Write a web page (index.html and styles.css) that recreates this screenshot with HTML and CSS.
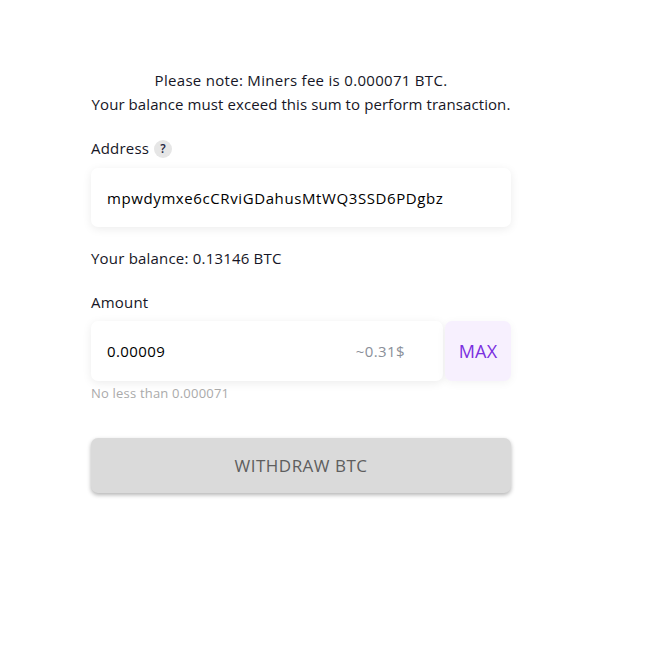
FILE: index.html
```html
<!DOCTYPE html>
<html>
<head>
<meta charset="utf-8">
<link rel="stylesheet" href="styles.css">
</head>
<body>
<div class="form">
  <div class="note">
    <div class="note-line first">Please note: Miners fee is 0.000071 BTC.</div>
    <div class="note-line">Your balance must exceed this sum to perform transaction.</div>
  </div>
  <div class="label address-label">Address <span class="help">?</span></div>
  <div class="field address">mpwdymxe6cCRviGDahusMtWQ3SSD6PDgbz</div>
  <div class="balance">Your balance: 0.13146 BTC</div>
  <div class="label amount-label">Amount</div>
  <div class="amount-row">
    <div class="field amount"><span class="value">0.00009</span><span class="usd">~0.31$</span></div>
    <div class="max">MAX</div>
  </div>
  <div class="hint">No less than 0.000071</div>
  <div class="submit">WITHDRAW BTC</div>
</div>
</body>
</html>
```
FILE: styles.css
```css
html, body { margin: 0; padding: 0; background: #fff; }
body { font-family: "Open Sans", "Liberation Sans", sans-serif; color: #161626; font-size: 15px; letter-spacing: 0.2px; }
.form { width: 420px; margin-left: 91px; padding-top: 68px; padding-bottom: 40px; }
.note { text-align: center; line-height: 24px; font-size: 15px; white-space: nowrap; display: flex; flex-direction: column; align-items: center; }
.note-line { letter-spacing: 0.08px; }
.note-line.first { letter-spacing: 0.3px; }
.label { margin-top: 24px; height: 20px; line-height: 20px; display: flex; align-items: center; gap: 5px; }
.address-label { margin-top: 22px; }
.help { width: 18px; height: 18px; border-radius: 50%; background: #e6e6e6; font-size: 12px; font-weight: 600; display: flex; align-items: center; justify-content: center; color: #1c2340; margin-top: 2px; letter-spacing: 0; }
.field { background: #fff; border-radius: 7px; box-shadow: 0 2px 10px rgba(0,0,0,0.08); box-sizing: border-box; padding: 0 16px; display: flex; align-items: center; }
.address { margin-top: 10px; height: 59px; color: #000; letter-spacing: 0.6px; }
.balance { margin-top: 21px; line-height: 20px; }
.amount-label { margin-top: 24px; }
.amount-row { margin-top: 9px; display: flex; gap: 2px; height: 60px; }
.amount { flex: 1; justify-content: space-between; color: #000; padding-right: 38px; letter-spacing: 0.4px; }
.usd { color: #8a8f99; font-weight: 500; }
.max { width: 66px; background: #f7f0fe; border-radius: 7px; color: #7b2fe0; display: flex; align-items: center; justify-content: center; font-size: 18px; font-weight: 500; box-shadow: 0 2px 10px rgba(0,0,0,0.05); }
.hint { margin-top: 3px; font-size: 13px; color: #aaaaaa; line-height: 18px; }
.submit { margin-top: 36px; height: 55px; background: #dadada; border-radius: 7px; box-shadow: 0 2px 4px rgba(0,0,0,0.3); color: #5e5e5e; display: flex; align-items: center; justify-content: center; font-size: 17px; font-weight: 500; letter-spacing: 0.5px; }
```
